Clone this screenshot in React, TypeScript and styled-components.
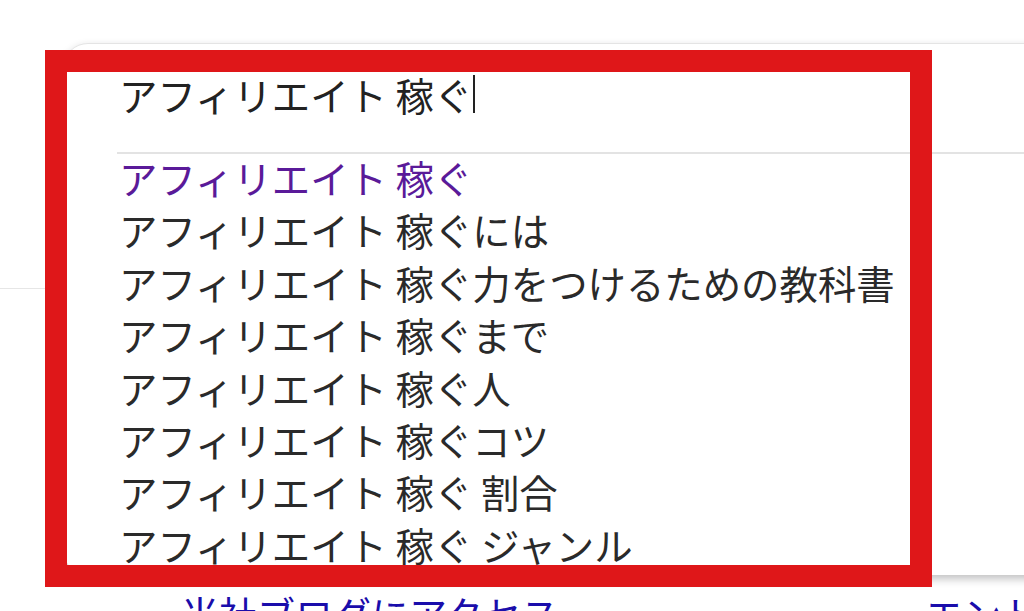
import styled, { createGlobalStyle } from 'styled-components'

const GlobalStyle = createGlobalStyle`
	html, body {
		margin: 0;
		padding: 0;
		background: #fff;
		overflow: hidden;
	}
	body {
		font-family: 'Noto Sans CJK JP', 'Noto Sans', sans-serif;
	}
`

const SPage = styled.div`
	position: relative;
	width: 1024px;
	height: 611px;
	overflow: hidden;
	background: #fff;
`
const SHeader = styled.header`
	height: 288px;
	border-bottom: 1px solid #e6e6e6;
`
const SResults = styled.section`
	display: flex;
	padding-top: 305px;
	padding-left: 181px;
`
const SResultLink = styled.a<{ $width?: number }>`
	display: block;
	width: ${(p) => (p.$width ? `${p.$width}px` : 'auto')};
	flex-shrink: 0;
	font-size: 38px;
	line-height: 1;
	color: #1a0dab;
	text-decoration: none;
	white-space: nowrap;
`
const SSuggest = styled.div`
	position: absolute;
	left: 64px;
	top: 43px;
	width: 1010px;
	background: #fff;
	border-top: 1px solid #e4e4e4;
	border-radius: 24px;
	box-shadow: 0 4px 8px rgba(32, 33, 36, 0.28);
	overflow: hidden;
`
const SInputRow = styled.div`
	display: flex;
	align-items: center;
	height: 108px;
	padding-left: 55px;
	padding-bottom: 8px;
	box-sizing: border-box;
	font-size: 38.4px;
	color: #222;
`
const SCaret = styled.span`
	display: inline-block;
	width: 2px;
	height: 38px;
	margin-left: 1px;
	background: #222;
`
const SDivider = styled.div`
	height: 2px;
	margin-left: 53px;
	background: #e3e3e3;
`
const SList = styled.ul`
	list-style: none;
	margin: -3px 0 0;
	padding: 0 0 5px;
`
const SItem = styled.li<{ $visited?: boolean }>`
	padding-left: 55px;
	height: 52.4px;
	line-height: 52.4px;
	font-size: 38.4px;
	white-space: nowrap;
	color: ${(p) => (p.$visited ? '#5a1a99' : '#2a2a2a')};
`
const SHighlight = styled.div`
	position: absolute;
	left: 45px;
	top: 50px;
	width: 887px;
	height: 537px;
	box-sizing: border-box;
	border: 22px solid #df1719;
	pointer-events: none;
`

const query = 'アフィリエイト 稼ぐ'
const suggestions = [
	'',
	'には',
	'力をつけるための教科書',
	'まで',
	'人',
	'コツ',
	' 割合',
	' ジャンル',
]

export default function App() {
	return (
		<>
			<GlobalStyle />
			<SPage>
				<SHeader />
				<SResults>
					<SResultLink $width={744} href="#">
						当社ブログにアクセス
					</SResultLink>
					<SResultLink href="#">エントリー</SResultLink>
				</SResults>
				<SSuggest>
					<SInputRow>
						{query}
						<SCaret />
					</SInputRow>
					<SDivider />
					<SList>
						{suggestions.map((tail, index) => (
							<SItem key={index} $visited={index === 0}>
								{query}
								{tail}
							</SItem>
						))}
					</SList>
				</SSuggest>
				<SHighlight />
			</SPage>
		</>
	)
}
